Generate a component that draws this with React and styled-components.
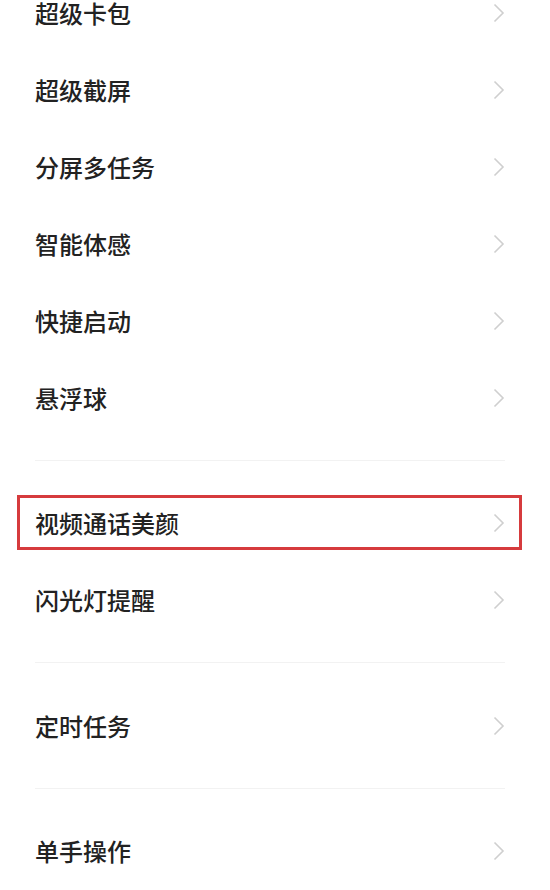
import React from "react";
import styled, { createGlobalStyle } from "styled-components";

const GlobalStyle = createGlobalStyle`
  html, body {
    margin: 0;
    padding: 0;
    background: #fff;
  }
  body {
    font-family: "Noto Sans CJK SC", "Noto Sans", sans-serif;
  }
`;

const Page = styled.div`
  width: 550px;
  height: 890px;
  overflow: hidden;
  background: #fff;
`;

const List = styled.div`
  display: flex;
  flex-direction: column;
  margin-top: -26px;
  padding: 0 45px 0 35px;
`;

const Group = styled.div`
  display: flex;
  flex-direction: column;
`;

const Separator = styled.div`
  height: 48.5px;
  display: flex;
  align-items: center;
  &::after {
    content: "";
    flex: 1;
    height: 1px;
    background: #f2f2f2;
  }
`;

const Row = styled.div`
  position: relative;
  height: 77px;
  display: flex;
  align-items: center;
  justify-content: space-between;

  ${(p) =>
    p.highlighted &&
    `
    &::before {
      content: "";
      position: absolute;
      top: 10px;
      bottom: 12px;
      left: -18px;
      right: -17px;
      border: 3px solid #d63b3d;
      pointer-events: none;
    }
  `}
`;

const Label = styled.span`
  font-size: 24px;
  font-weight: 500;
  color: #222;
  line-height: 1;
`;

const Chevron = () => (
  <svg width="12" height="20" viewBox="0 0 12 20" fill="none">
    <path d="M1.5 1.5 L10 10 L1.5 18.5" stroke="#cfcfcf" strokeWidth="1.6" />
  </svg>
);

const groups = [
  ["超级卡包", "超级截屏", "分屏多任务", "智能体感", "快捷启动", "悬浮球"],
  ["视频通话美颜", "闪光灯提醒"],
  ["定时任务"],
  ["单手操作"],
];

export default function App() {
  return (
    <Page>
      <GlobalStyle />
      <List>
        {groups.map((items, gi) => (
          <React.Fragment key={gi}>
            {gi > 0 && <Separator />}
            <Group>
              {items.map((title) => (
                <Row key={title} highlighted={title === "视频通话美颜"}>
                  <Label>{title}</Label>
                  <Chevron />
                </Row>
              ))}
            </Group>
          </React.Fragment>
        ))}
      </List>
    </Page>
  );
}
